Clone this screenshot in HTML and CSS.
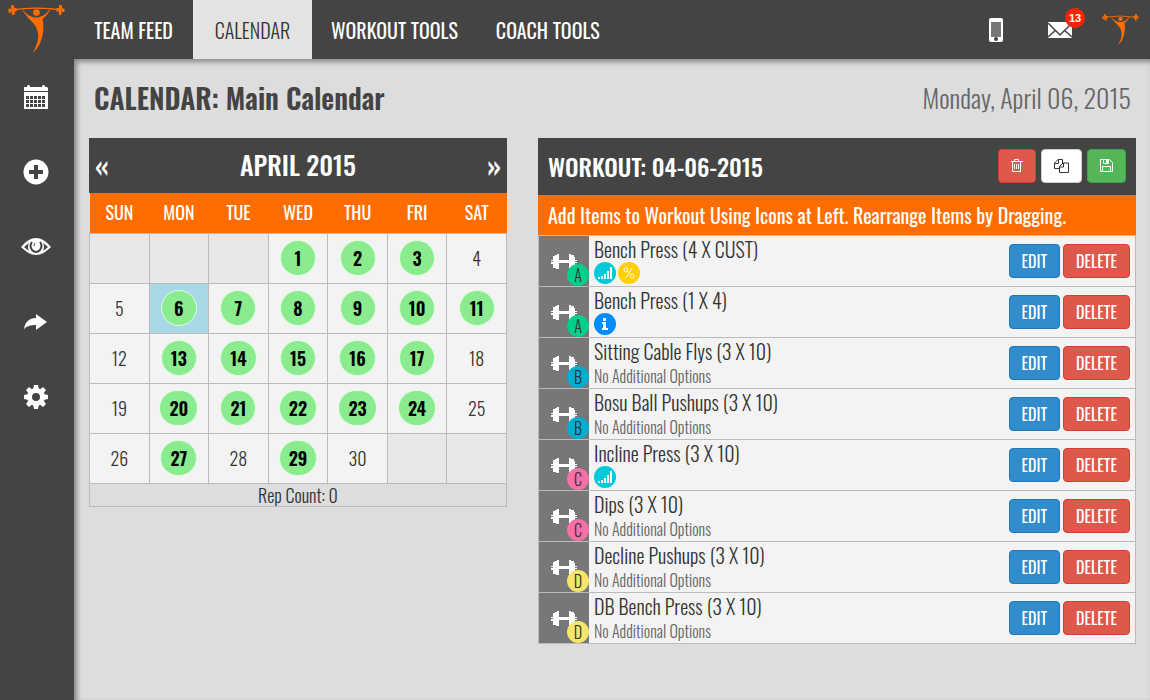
FILE: index.html
```html
<!DOCTYPE html>
<html lang="en">
<head>
  <meta charset="UTF-8" />
  <meta name="viewport" content="width=device-width, initial-scale=1.0" />
  <title>Main Calendar</title>
  <link rel="stylesheet" href="styles.css">
</head>
<body>
  <!-- shared icons -->
  <svg class="sprite" aria-hidden="true">
    <symbol id="logo" viewBox="0 0 170 145">
      <path d="M4 16Q85 3 166 16" fill="none" stroke="currentColor" stroke-width="4"/>
      <path d="M8 1l9 0 3 28-9 2zM0 12l7-2 2 13-8 1zM18 9l7 0 0 11-6 0zM153 0l9 1-2 30-8-2zM162 9l8 3-1 9-7 1zM145 9l7 0-1 11-5 0z"/>
      <circle cx="85" cy="23" r="10"/>
      <path d="M40 10C50 23 61 34 74 36Q86 40 98 35C111 31 120 20 127 10C123 25 112 36 103 42C108 62 106 85 100 103C95 122 85 136 74 143C91 115 95 91 84 68C76 49 55 42 40 10z"/>
    </symbol>
    <symbol id="barbell" viewBox="0 0 26 16">
      <path d="M2 2h2V1h2V0h2v6h10V0h2v1h3v2h1v3h2v1h-2v1h2v1h-2v3h-1v1h-3v2h-2v-6H8v6H5v-1H2v-4H0V8h2V7H0V6h2z"/>
    </symbol>
    <symbol id="bars" viewBox="0 0 14 12">
      <path d="M0 10h2v2H0zM3 9h2v3H3zM6 7h2v5H6zM9 4h2v8H9zM12 0h2v12h-2z"/>
    </symbol>
    <symbol id="percent" viewBox="0 0 12 12">
      <g fill="none" stroke="currentColor"><circle cx="3" cy="3" r="2"/><circle cx="9" cy="9" r="2"/><path d="M9 1L3 11"/></g>
    </symbol>
    <symbol id="info" viewBox="0 0 6 12">
      <path d="M1 0h3v3H1zM0 4h4v6h2v2H0v-2h1V6H0z"/>
    </symbol>
  </svg>

  <header class="topbar">
    <a href="#" class="brand" aria-label="Home"><svg class="logo"><use href="#logo"/></svg></a>
    <nav class="main-nav">
      <a href="#">TEAM FEED</a>
      <a href="#" class="active">CALENDAR</a>
      <a href="#">WORKOUT TOOLS</a>
      <a href="#">COACH TOOLS</a>
    </nav>
    <div class="top-icons">
      <a href="#" aria-label="Mobile">
        <svg width="14" height="24" viewBox="0 0 14 24"><rect width="14" height="24" rx="2"/><path fill="#777" d="M2 4h10v15H2z"/><circle cx="7" cy="21" r="2" fill="#444"/></svg>
      </a>
      <a href="#" class="mail" aria-label="Messages">
        <svg width="24" height="16" viewBox="0 0 24 16"><path d="M0 0h24v16H0z"/><path d="M0 1l12 12L24 1M0 15l8-7M24 15l-8-7" fill="none" stroke="#444" stroke-width="1.5"/></svg>
        <span class="badge">13</span>
      </a>
      <a href="#" aria-label="Profile"><svg class="logo small"><use href="#logo"/></svg></a>
    </div>
  </header>

  <div class="page">
    <aside class="sidebar">
      <a href="#" aria-label="Calendar">
        <svg width="24" height="24" viewBox="0 0 24 24"><path d="M0 2h3V1l1-1h1l1 1v1h12V1l1-1h1l1 1v1h2l1 1v3H0V3zM0 7h24v17H0z"/><path fill="#444" d="M2 11h3v3H2zM6 11h3v3H6zM10 11h3v3h-3zM14 11h3v3h-3zM18 11h3v3h-3zM2 15h3v3H2zM6 15h3v3H6zM10 15h3v3h-3zM14 15h3v3h-3zM18 15h3v3h-3zM2 19h3v3H2zM6 19h3v3H6zM10 19h3v3h-3zM14 19h3v3h-3zM18 19h3v3h-3z"/></svg>
      </a>
      <a href="#" aria-label="Add">
        <svg width="26" height="26" viewBox="0 0 26 26"><circle cx="13" cy="13" r="12.5"/><path fill="#444" d="M11 6h4v5h5v4h-5v5h-4v-5H6v-4h5z"/></svg>
      </a>
      <a href="#" aria-label="View">
        <svg width="30" height="18" viewBox="0 0 30 18"><path d="M0 9C5 3 10 0 15 0s10 3 15 9c-5 5-10 8-15 8S5 14 0 9z"/><path fill="#444" d="M3 9l5-4q-2 4 0 8-3-2-5-4zM27 9l-5-4q2 4 0 8 3-2 5-4z"/><path d="M11 4q-3 4 0 8 4 4 8 0 3-4 0-8" fill="none" stroke="#444" stroke-width="2"/><path d="M14 5q-1 1-1 3" fill="none" stroke="#444" stroke-width="1"/></svg>
      </a>
      <a href="#" aria-label="Share">
        <svg width="24" height="16" viewBox="0 0 24 16"><path d="M12 0l11 8-11 8v-5C6 11 3 12 0 15 1 8 5 4 12 4z"/></svg>
      </a>
      <a href="#" aria-label="Settings">
        <svg width="24" height="24" viewBox="0 0 24 24"><circle cx="12" cy="12" r="6.500" fill="none" stroke="currentColor" stroke-width="5"/><path d="M10 0h4l1 5H9zM10 24h4l1-5H9zM0 10v4l5 1V9zM24 10v4l-5 1V9zM2 5l3-3 4 3-4 4zM22 5l-3-3-4 3 4 4zM2 19l3 3 4-3-4-4zM22 19l-3 3-4-3 4-4z"/></svg>
      </a>
    </aside>

    <main>
      <div class="heading">
        <h1>CALENDAR: Main Calendar</h1>
        <p>Monday, April 06, 2015</p>
      </div>

      <div class="panels">
        <section class="calendar">
          <div class="calendar-head">
            <a href="#" aria-label="Previous month">«</a>
            <h2>APRIL 2015</h2>
            <a href="#" aria-label="Next month">»</a>
          </div>
          <table>
            <thead>
              <tr><th>SUN</th><th>MON</th><th>TUE</th><th>WED</th><th>THU</th><th>FRI</th><th>SAT</th></tr>
            </thead>
            <tbody>
              <tr><td class="empty"></td><td class="empty"></td><td class="empty"></td><td><b>1</b></td><td><b>2</b></td><td><b>3</b></td><td>4</td></tr>
              <tr><td>5</td><td class="selected"><b>6</b></td><td><b>7</b></td><td><b>8</b></td><td><b>9</b></td><td><b>10</b></td><td><b>11</b></td></tr>
              <tr><td>12</td><td><b>13</b></td><td><b>14</b></td><td><b>15</b></td><td><b>16</b></td><td><b>17</b></td><td>18</td></tr>
              <tr><td>19</td><td><b>20</b></td><td><b>21</b></td><td><b>22</b></td><td><b>23</b></td><td><b>24</b></td><td>25</td></tr>
              <tr><td>26</td><td><b>27</b></td><td>28</td><td><b>29</b></td><td>30</td><td class="empty"></td><td class="empty"></td></tr>
            </tbody>
            <tfoot>
              <tr><td colspan="7">Rep Count: 0</td></tr>
            </tfoot>
          </table>
        </section>

        <section class="workout">
          <div class="workout-head">
            <h2>WORKOUT: 04-06-2015</h2>
            <button class="btn red" aria-label="Delete workout">
              <svg width="12" height="13" viewBox="0 0 12 13"><path d="M0 2.5h12M3.500 2V.5h4V2M1.500 3v9.500h8V3M3.500 5v5M5.500 5v5M7.500 5v5" fill="none" stroke="currentColor"/></svg>
            </button>
            <button class="btn white" aria-label="Copy workout">
              <svg width="15" height="14" viewBox="0 0 15 14"><path d="M5 9.500H.5V4L4 .5h4.500V4M4.500.5v4H.5M5.500 13.500V7.500L9 4h5.500v9.500zM9.500 4v4H5.500" fill="none" stroke="currentColor"/></svg>
            </button>
            <button class="btn green" aria-label="Save workout">
              <svg width="13" height="13" viewBox="0 0 13 13"><path d="M.5.500h9l3 3v9H.5zM2.500 12V7.500h8V12M3.500.5v4h5v-4" fill="none" stroke="currentColor"/><path d="M6 1h2v3H6z"/></svg>
            </button>
          </div>
          <p class="hint">Add Items to Workout Using Icons at Left. Rearrange Items by Dragging.</p>
          <ul class="items">
            <li>
              <div class="thumb"><svg><use href="#barbell"/></svg><span class="group a">A</span></div>
              <div class="info"><h3>Bench Press (4 X CUST)</h3>
                <div class="options"><span class="opt cyan"><svg width="14" height="12"><use href="#bars"/></svg></span><span class="opt gold"><svg width="12" height="12"><use href="#percent"/></svg></span></div></div>
              <button class="btn blue">EDIT</button><button class="btn red">DELETE</button>
            </li>
            <li>
              <div class="thumb"><svg><use href="#barbell"/></svg><span class="group a">A</span></div>
              <div class="info"><h3>Bench Press (1 X 4)</h3>
                <div class="options"><span class="opt azure"><svg width="6" height="12"><use href="#info"/></svg></span></div></div>
              <button class="btn blue">EDIT</button><button class="btn red">DELETE</button>
            </li>
            <li>
              <div class="thumb"><svg><use href="#barbell"/></svg><span class="group b">B</span></div>
              <div class="info"><h3>Sitting Cable Flys (3 X 10)</h3><p>No Additional Options</p></div>
              <button class="btn blue">EDIT</button><button class="btn red">DELETE</button>
            </li>
            <li>
              <div class="thumb"><svg><use href="#barbell"/></svg><span class="group b">B</span></div>
              <div class="info"><h3>Bosu Ball Pushups (3 X 10)</h3><p>No Additional Options</p></div>
              <button class="btn blue">EDIT</button><button class="btn red">DELETE</button>
            </li>
            <li>
              <div class="thumb"><svg><use href="#barbell"/></svg><span class="group c">C</span></div>
              <div class="info"><h3>Incline Press (3 X 10)</h3>
                <div class="options"><span class="opt cyan"><svg width="14" height="12"><use href="#bars"/></svg></span></div></div>
              <button class="btn blue">EDIT</button><button class="btn red">DELETE</button>
            </li>
            <li>
              <div class="thumb"><svg><use href="#barbell"/></svg><span class="group c">C</span></div>
              <div class="info"><h3>Dips (3 X 10)</h3><p>No Additional Options</p></div>
              <button class="btn blue">EDIT</button><button class="btn red">DELETE</button>
            </li>
            <li>
              <div class="thumb"><svg><use href="#barbell"/></svg><span class="group d">D</span></div>
              <div class="info"><h3>Decline Pushups (3 X 10)</h3><p>No Additional Options</p></div>
              <button class="btn blue">EDIT</button><button class="btn red">DELETE</button>
            </li>
            <li>
              <div class="thumb"><svg><use href="#barbell"/></svg><span class="group d">D</span></div>
              <div class="info"><h3>DB Bench Press (3 X 10)</h3><p>No Additional Options</p></div>
              <button class="btn blue">EDIT</button><button class="btn red">DELETE</button>
            </li>
          </ul>
        </section>
      </div>
    </main>
  </div>
</body>
</html>
```
FILE: styles.css
```css
* {
  box-sizing: border-box;
}

body {
  margin: 0;
  min-height: 100vh;
  display: flex;
  flex-direction: column;
  font-family: Oswald, "Liberation Sans Narrow", "Roboto Condensed", "Open Sans Condensed", "Liberation Sans", sans-serif;
  background: #ddd;
  color: #333;
}

h1, h2, h3, p, ul {
  margin: 0;
  padding: 0;
}

a {
  color: inherit;
  text-decoration: none;
}

svg {
  display: block;
  fill: currentColor;
}

.sprite {
  display: none;
}

/* top bar */
.topbar {
  display: flex;
  height: 59px;
  background: #444;
  color: #fff;
}

.brand {
  width: 74px;
  padding: 5px 8px;
}

.logo {
  width: 57px;
  height: 48px;
  color: #ff6d00;
}

.logo.small {
  width: 37px;
  height: 31px;
}

.main-nav {
  display: flex;
  flex: 1;
}

.main-nav a {
  min-width: 119px;
  padding: 0 19px;
  font-size: 20px;
  line-height: 60px;
  text-align: center;
}

.main-nav .active {
  background: #e3e3e3;
  color: #333;
  font-weight: 300;
}

.top-icons {
  display: flex;
  align-items: center;
  gap: 45px;
  padding: 0 11px;
}

.top-icons a:last-child {
  margin-left: -15px;
}

.mail {
  position: relative;
}

.badge {
  position: absolute;
  top: -14px;
  right: -13px;
  width: 20px;
  border-radius: 50%;
  background: #f20;
  font: bold 11px/20px "Liberation Sans", sans-serif;
  text-align: center;
}

/* side bar */
.page {
  display: flex;
  flex: 1;
}

.sidebar {
  width: 74px;
  flex-shrink: 0;
  background: #444;
  color: #fff;
}

.sidebar a {
  display: flex;
  align-items: center;
  justify-content: center;
  height: 75px;
  padding-right: 2px;
}

main {
  flex: 1;
  padding: 0 14px 15px 15px;
  box-shadow: inset 3px 3px 5px #888;
}

.heading {
  display: flex;
  justify-content: space-between;
  align-items: center;
  height: 79px;
  padding: 0 5px 2px;
}

.heading h1 {
  font-size: 28px;
  font-weight: 600;
  color: #444;
}

.heading p {
  font-size: 26px;
  font-weight: 300;
  color: #666;
}

.panels {
  display: grid;
  grid-template-columns: 418fr 598fr;
  gap: 31px;
  align-items: start;
}

/* calendar */
.calendar-head {
  display: flex;
  justify-content: space-between;
  align-items: center;
  height: 55px;
  padding: 0 6px 2px;
  background: #444;
  color: #fff;
  font-size: 28px;
  font-weight: 600;
}

.calendar-head h2 {
  font-size: 26px;
  font-weight: 500;
}

.calendar table {
  width: 100%;
  table-layout: fixed;
  border-collapse: collapse;
}

.calendar th {
  height: 40px;
  padding: 0 0 2px;
  background: #ff6d00;
  color: #fff;
  font-size: 18px;
  font-weight: 400;
}

.calendar td {
  height: 50px;
  padding: 0;
  border: 1px solid #bbb;
  background: #f3f3f3;
  color: #333;
  font-size: 18px;
  font-weight: 300;
  text-align: center;
}

.calendar td b {
  display: inline-block;
  padding: 0 9px;
  min-width: 36px;
  border: 1px solid #dfd;
  border-radius: 18px;
  background: #8bec8f;
  color: #000;
  font-weight: 600;
  line-height: 34px;
}

.calendar .empty {
  background: #e8e8e8;
}

.calendar .selected {
  background: #a8d8e6;
}

.calendar tfoot td {
  height: 23px;
  background: #ddd;
  line-height: 22px;
}

/* workout */
.workout-head {
  display: flex;
  align-items: center;
  gap: 5px;
  height: 57px;
  padding: 0 10px 2px;
  background: #444;
  color: #fff;
}

.workout-head h2 {
  flex: 1;
  font-size: 24px;
  font-weight: 500;
}

.btn {
  height: 34px;
  padding: 0 12px;
  border: 1px solid;
  border-radius: 4px;
  color: #fff;
  font-family: inherit;
  font-size: 16px;
  cursor: pointer;
}

.btn.red {
  background: #df584c;
  border-color: #d43f33;
}

.btn.green {
  background: #55b559;
  border-color: #41a347;
}

.btn.blue {
  background: #328bca;
  border-color: #2079b8;
}

.btn.white {
  background: #fff;
  border-color: #ccc;
  color: #333;
}

.hint {
  height: 40px;
  padding: 0 10px;
  background: #ff6d00;
  color: #fff;
  font-size: 20px;
  line-height: 40px;
}

.items {
  list-style: none;
  border: 1px solid #bbb;
  border-bottom: 0;
}

.items li {
  display: flex;
  align-items: center;
  gap: 3px;
  height: 51px;
  padding-right: 5px;
  border-bottom: 1px solid #bbb;
  background: #f3f3f3;
}

.thumb {
  position: relative;
  width: 50px;
  height: 50px;
  padding: 18px 12px;
  background: #777;
  color: #fff;
}

.thumb svg {
  width: 26px;
  height: 16px;
}

.group {
  position: absolute;
  right: 0;
  bottom: 0;
  width: 22px;
  border-radius: 50%;
  color: #333;
  font-size: 16px;
  font-weight: 300;
  line-height: 22px;
  text-align: center;
}

.group.a { background: #00d08a; }
.group.b { background: #00aed0; }
.group.c { background: #f96fa8; }
.group.d { background: #f5e66b; }

.info {
  flex: 1;
  height: 50px;
  padding-left: 2px;
}

.info h3 {
  font-size: 20px;
  font-weight: 300;
  line-height: 26px;
}

.info p {
  color: #666;
  font-size: 16px;
  font-weight: 300;
  line-height: 24px;
}

.options {
  display: flex;
  gap: 2px;
}

.opt {
  display: flex;
  align-items: center;
  justify-content: center;
  width: 22px;
  height: 22px;
  border-radius: 50%;
  color: #fff;
}

.opt.cyan { background: #00cad8; }
.opt.gold { background: #ffd000; }
.opt.azure { background: #008cff; }
```
